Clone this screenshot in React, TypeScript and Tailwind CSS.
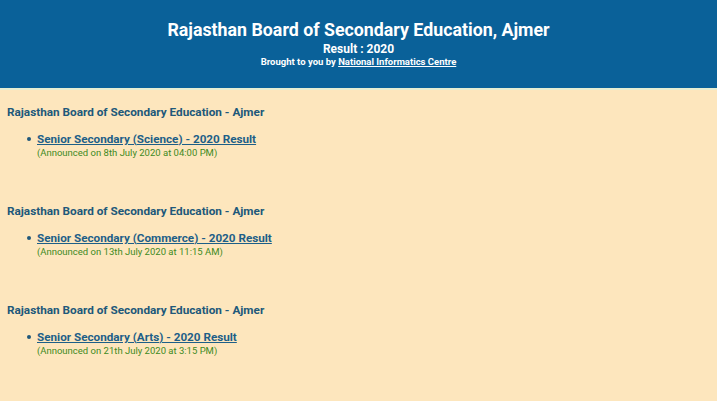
import React from "react";

const items = [
  { stream: "Science", date: "8th July 2020 at 04:00 PM" },
  { stream: "Commerce", date: "13th July 2020 at 11:15 AM" },
  { stream: "Arts", date: "21th July 2020 at 3:15 PM" },
];

export default function App() {
  return (
    <div className="min-h-[401px] w-full bg-[#fde6bd]" style={{ fontFamily: "Roboto, 'Liberation Sans', sans-serif" }}>
      <header className="h-[88px] bg-[#0a6199] text-white text-center flex flex-col items-center pt-[18px]">
        <h1 className="text-[17.8px] font-bold leading-[24px]">Rajasthan Board of Secondary Education, Ajmer</h1>
        <div className="text-[12px] font-bold leading-[13px] mt-[1px]">Result : 2020</div>
        <div className="text-[9.5px] font-bold leading-[12px]">
          Brought to you by <span className="underline">National Informatics Centre</span>
        </div>
      </header>
      <div className="h-[2px] bg-[#e6eed3]" />
      <main className="pl-[7px] pt-[15px]">
        {items.map((it) => (
          <section key={it.stream} className="h-[99px]">
            <h2 className="text-[11.75px] font-bold leading-[14px] text-[#20587a]">Rajasthan Board of Secondary Education - Ajmer</h2>
            <ul className="mt-[13px] pl-[20px]">
              <li className="flex items-start gap-[6px]">
                <span className="mt-[5px] h-[4px] w-[4px] rounded-full bg-[#20587a] shrink-0" />
                <div>
                  <a href="#" className="block text-[11.7px] font-bold leading-[14px] text-[#1d5f88] underline">
                    Senior Secondary ({it.stream}) - 2020 Result
                  </a>
                  <div className="text-[9.5px] leading-[12px] text-[#3d8a1e] mt-[1px]">(Announced on {it.date})</div>
                </div>
              </li>
            </ul>
          </section>
        ))}
      </main>
    </div>
  );
}
